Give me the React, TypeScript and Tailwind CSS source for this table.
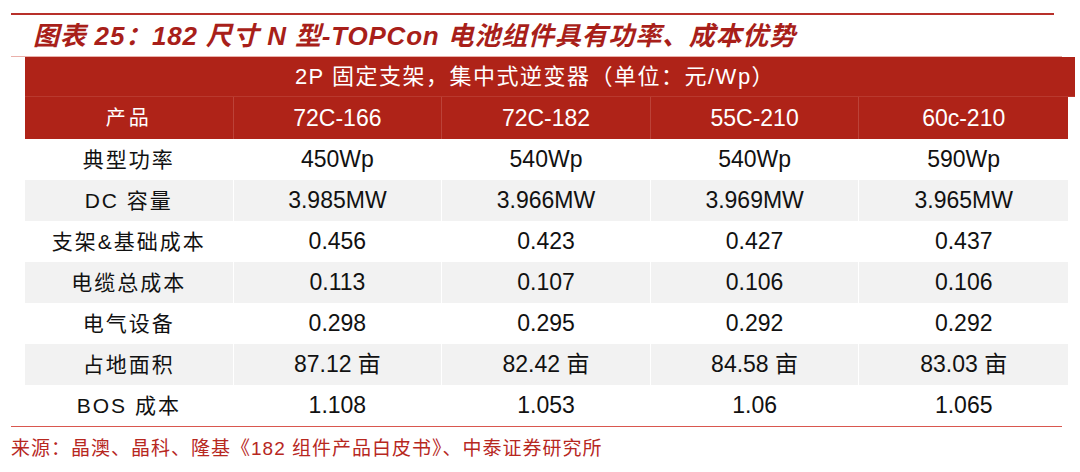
import React from "react"

const font = "font-['Liberation_Sans','Noto_Sans_CJK_SC',sans-serif]"

const models = ["72C-166", "72C-182", "55C-210", "60c-210"]

const rows: { label: string; values: string[] }[] = [
  { label: "典型功率", values: ["450Wp", "540Wp", "540Wp", "590Wp"] },
  { label: "DC 容量", values: ["3.985MW", "3.966MW", "3.969MW", "3.965MW"] },
  { label: "支架&基础成本", values: ["0.456", "0.423", "0.427", "0.437"] },
  { label: "电缆总成本", values: ["0.113", "0.107", "0.106", "0.106"] },
  { label: "电气设备", values: ["0.298", "0.295", "0.292", "0.292"] },
  { label: "占地面积", values: ["87.12 亩", "82.42 亩", "84.58 亩", "83.03 亩"] },
  { label: "BOS 成本", values: ["1.108", "1.053", "1.06", "1.065"] },
]

export default function App() {
  return (
    <div className={`w-[1080px] h-[472px] bg-white overflow-hidden ${font}`}>
      <div className="pt-[13px] pl-[11px]">
        <div className="w-[1043px] h-[2px] bg-[#b8302a]" />
        <div className="h-[41px] flex items-center pl-[22px] text-[26px] font-bold italic text-[#a81f1a] leading-none tracking-[0.8px]">
          图表 25：182 尺寸 N 型-TOPCon 电池组件具有功率、成本优势
        </div>
        <div className="w-[1051px] h-px bg-[#eab0aa]" />
      </div>

      <div className="pl-[25px]">
        <div className="w-[1050px] h-[40px] bg-[#af2318] border-b border-[#b9392e] flex items-center justify-center pr-[30px] text-white text-[22px] tracking-[1.5px]">
          2P 固定支架，集中式逆变器（单位：元/Wp）
        </div>
        <div className="w-[1043px] h-[42px] bg-[#af2318] grid grid-cols-5 text-white">
          <div className="flex items-center justify-center text-[20px] tracking-[3px] border-r border-[#bc4238]">
            产品
          </div>
          {models.map((m, i) => (
            <div
              key={m}
              className={`flex items-center justify-center text-[23px] ${i < 3 ? "border-r border-[#bc4238]" : ""}`}
            >
              {m}
            </div>
          ))}
        </div>
        {rows.map((r, ri) => (
          <div
            key={r.label}
            className={`w-[1043px] h-[41px] grid grid-cols-5 text-[#111] ${ri % 2 === 1 ? "bg-[#f2f2f2]" : "bg-white"}`}
          >
            <div className="flex items-center justify-center text-[21px] tracking-[2px] border-r border-white">
              {r.label}
            </div>
            {r.values.map((v, i) => (
              <div
                key={i}
                className={`flex items-center justify-center text-[23px] ${i < 3 ? "border-r border-white" : ""}`}
              >
                {v}
              </div>
            ))}
          </div>
        ))}
      </div>

      <div className="pl-[11px]">
        <div className="w-[1051px] h-px bg-[#d9574f]" />
        <div className="pt-[10px] text-[19px] text-[#b7281f] leading-[24px] tracking-[1px]">
          来源：晶澳、晶科、隆基《182 组件产品白皮书》、中泰证券研究所
        </div>
      </div>
    </div>
  )
}
